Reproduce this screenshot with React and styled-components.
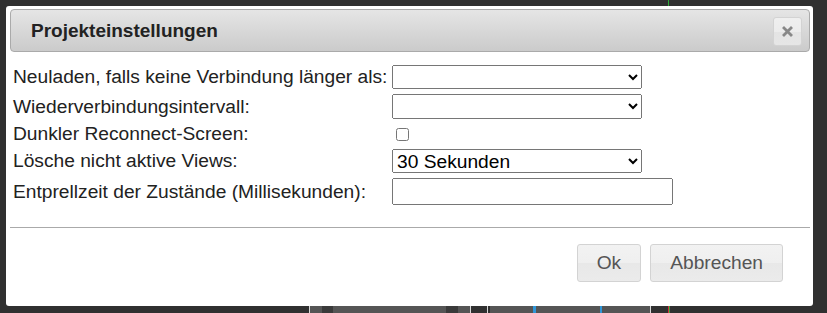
import React from "react";
import styled, { createGlobalStyle } from "styled-components";

const GlobalStyle = createGlobalStyle`
  html, body {
    margin: 0;
    padding: 0;
    background: #303030;
    font-family: "Liberation Sans", Arial, sans-serif;
  }
`;

const stripSegments = [
  { w: 309, c: "transparent" },
  { w: 1, c: "#d8d8d8" },
  { w: 12, c: "#555" },
  { w: 11, c: "#3a3a3a" },
  { w: 113, c: "#555" },
  { w: 12, c: "#3a3a3a" },
  { w: 12, c: "#555" },
  { w: 1, c: "#d8d8d8" },
  { w: 16, c: "transparent" },
  { w: 1, c: "#d8d8d8" },
  { w: 2, c: "transparent" },
  { w: 43, c: "#555" },
  { w: 3, c: "#2f96d8" },
  { w: 64, c: "#555" },
  { w: 2, c: "#2f96d8" },
  { w: 48, c: "#555" },
  { w: 1, c: "#d8d8d8" },
  { w: 17, c: "transparent" },
  { w: 1, c: "#d0303a" },
  { w: 1, c: "#2faa3a" },
];

const Options = [
  "Neuladen, falls keine Verbindung länger als:",
  "Wiederverbindungsintervall:",
  "Dunkler Reconnect-Screen:",
  "Lösche nicht aktive Views:",
  "Entprellzeit der Zustände (Millisekunden):",
];

const App = () => {
  return (
    <Page>
      <GlobalStyle />
      <BottomStrip>
        {stripSegments.map((s, i) => (
          <StripBlock key={i} style={{ width: s.w, background: s.c }} />
        ))}
      </BottomStrip>
      <TopMark />
      <Dialog>
        <TitleBar>
          <Title>Projekteinstellungen</Title>
          <CloseButton aria-label="close">
            <svg width="11" height="11" viewBox="0 0 11 11">
              <path
                d="M2 2 L9 9 M9 2 L2 9"
                stroke="#888"
                strokeWidth="2.8"
                strokeLinecap="square"
              />
            </svg>
          </CloseButton>
        </TitleBar>
        <Form>
          <Label>{Options[0]}</Label>
          <Field h={24}>
            <Select>
              <option value=""></option>
            </Select>
          </Field>
          <Label>{Options[1]}</Label>
          <Field h={25}>
            <Select>
              <option value=""></option>
            </Select>
          </Field>
          <Label>{Options[2]}</Label>
          <Field h={20}>
            <Check type="checkbox" />
          </Field>
          <Label>{Options[3]}</Label>
          <Field h={24}>
            <Select defaultValue="30">
              <option value="30">30 Sekunden</option>
            </Select>
          </Field>
          <Label>{Options[4]}</Label>
          <Field h={27}>
            <TextInput type="text" />
          </Field>
        </Form>
        <ButtonPane>
          <Button>Ok</Button>
          <Button>Abbrechen</Button>
        </ButtonPane>
      </Dialog>
    </Page>
  );
};

export default App;

const Page = styled.div`
  position: relative;
  width: 827px;
  height: 313px;
  overflow: hidden;
  padding: 6px 0 0 6px;
  box-sizing: border-box;
`;

const BottomStrip = styled.div`
  position: absolute;
  left: 0;
  top: 306px;
  height: 7px;
  display: flex;
`;

const StripBlock = styled.div`
  height: 100%;
  flex: none;
`;

const TopMark = styled.div`
  position: absolute;
  left: 668px;
  top: 0;
  width: 1px;
  height: 6px;
  background: #2faa3a;
`;

const Dialog = styled.div`
  position: relative;
  width: 807px;
  height: 300px;
  box-sizing: border-box;
  background: #fff;
  border-radius: 3px;
  padding: 3px 3px 0 4px;
  display: flex;
  flex-direction: column;
`;

const TitleBar = styled.div`
  height: 43px;
  box-sizing: border-box;
  border: 1px solid #aaa;
  border-radius: 4px;
  background: linear-gradient(#e5e5e5, #cbcbcb);
  display: flex;
  align-items: center;
  justify-content: space-between;
  padding: 0 7px 0 20px;
`;

const Title = styled.span`
  font-size: 19px;
  font-weight: bold;
  color: #222;
`;

const CloseButton = styled.button`
  width: 29px;
  height: 29px;
  margin-top: 1px;
  box-sizing: border-box;
  border: 1px solid #d3d3d3;
  border-radius: 3px;
  background: linear-gradient(#efefef 0%, #ececec 50%, #e4e4e4 51%, #e6e6e6 100%);
  display: flex;
  align-items: center;
  justify-content: center;
  padding: 0;
`;

const Form = styled.div`
  display: grid;
  grid-template-columns: 375px auto;
  column-gap: 4px;
  row-gap: 5px;
  margin-top: 13px;
  padding-left: 3px;
  align-items: center;
`;

const Label = styled.div`
  font-size: 19.2px;
  color: #222;
  line-height: 20px;
  white-space: nowrap;
`;

const Field = styled.div`
  height: ${(p) => p.h}px;
  display: flex;
  align-items: flex-start;
`;

const Select = styled.select`
  width: 250px;
  height: 100%;
  margin: 0;
  font-family: "Liberation Sans", Arial, sans-serif;
  font-size: 19.2px;
  color: #000;
  box-sizing: border-box;
`;

const Check = styled.input`
  width: 13px;
  height: 13px;
  margin: 4px 0 0 4px;
`;

const TextInput = styled.input`
  width: 281px;
  height: 27px;
  margin: 0;
  box-sizing: border-box;
  font-family: "Liberation Sans", Arial, sans-serif;
  font-size: 19.2px;
`;

const ButtonPane = styled.div`
  margin-top: 22px;
  border-top: 1px solid #aaa;
  padding: 16px 27px 24px 0;
  display: flex;
  justify-content: flex-end;
  gap: 9px;
`;

const Button = styled.button`
  height: 38px;
  padding: 0 19px;
  box-sizing: border-box;
  border: 1px solid #d3d3d3;
  border-radius: 3px;
  background: linear-gradient(#f2f2f2 0%, #efefef 50%, #e8e8e8 51%, #ebebeb 100%);
  color: #555;
  font-family: "Liberation Sans", Arial, sans-serif;
  font-size: 19.2px;
  cursor: pointer;
`;
